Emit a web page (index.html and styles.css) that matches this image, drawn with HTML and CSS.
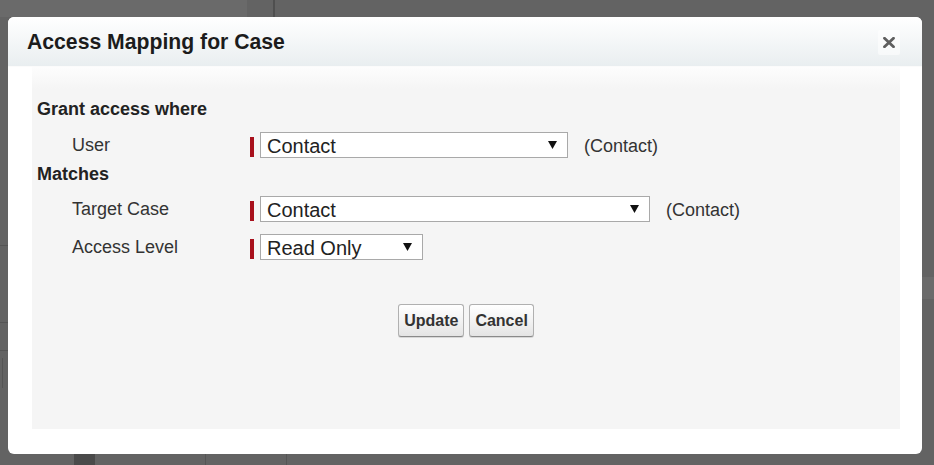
FILE: index.html
```html
<!DOCTYPE html>
<html>
<head>
<meta charset="utf-8">
<title>Access Mapping for Case</title>
<link rel="stylesheet" href="styles.css">
</head>
<body>
<div class="dialog">
  <div class="dialog-header">
    <h2 class="dialog-title">Access Mapping for Case</h2>
    <button class="close-btn" type="button" aria-label="Close">
      <svg width="12" height="11" viewBox="0 0 12 11"><path d="M1.5 1.2 L10.5 9.8 M10.5 1.2 L1.5 9.8" stroke="#5f5f5f" stroke-width="2.8" stroke-linecap="round"/></svg>
    </button>
  </div>
  <div class="dialog-body">
    <div class="panel">
      <div class="section-title">Grant access where</div>
      <div class="form-row row-user">
        <div class="label">User</div>
        <span class="required"></span>
        <div class="select select-user">
          <select><option>Contact</option></select>
          <svg class="arrow" width="9" height="8" viewBox="0 0 9 8"><path d="M0 0 H9 L4.5 8 Z" fill="#111"/></svg>
        </div>
        <span class="hint">(Contact)</span>
      </div>
      <div class="section-title section-matches">Matches</div>
      <div class="form-row row-target">
        <div class="label">Target Case</div>
        <span class="required"></span>
        <div class="select select-target">
          <select><option>Contact</option></select>
          <svg class="arrow" width="9" height="8" viewBox="0 0 9 8"><path d="M0 0 H9 L4.5 8 Z" fill="#111"/></svg>
        </div>
        <span class="hint">(Contact)</span>
      </div>
      <div class="form-row row-level">
        <div class="label">Access Level</div>
        <span class="required"></span>
        <div class="select select-level">
          <select><option>Read Only</option></select>
          <svg class="arrow" width="9" height="8" viewBox="0 0 9 8"><path d="M0 0 H9 L4.5 8 Z" fill="#111"/></svg>
        </div>
      </div>
      <div class="buttons">
        <button class="btn" type="button">Update</button>
        <button class="btn" type="button">Cancel</button>
      </div>
    </div>
  </div>
</div>
</body>
</html>
```

FILE: styles.css
```css
html, body {
  margin: 0;
  padding: 0;
}

body {
  width: 934px;
  height: 465px;
  overflow: hidden;
  box-sizing: border-box;
  padding: 17px 12px 0 8px;
  font-family: "Liberation Sans", Arial, sans-serif;
  background-color: #636363;
  background-image:
    linear-gradient(#4f4f4f, #4f4f4f),
    linear-gradient(#6a6a6a, #6a6a6a),
    linear-gradient(#555, #555),
    linear-gradient(#555, #555),
    linear-gradient(#555, #555),
    linear-gradient(#555, #555),
    linear-gradient(#4a4a4a, #4a4a4a),
    linear-gradient(#555, #555),
    linear-gradient(#555, #555),
    linear-gradient(#6b6b6b, #6b6b6b);
  background-size:
    2px 17px,
    247px 17px,
    8px 1px,
    8px 1px,
    8px 1px,
    1px 30px,
    21px 12px,
    1px 12px,
    1px 12px,
    12px 22px;
  background-position:
    273px 0,
    0 0,
    0 245px,
    0 322px,
    0 350px,
    2px 358px,
    74px 454px,
    205px 454px,
    286px 454px,
    922px 277px;
  background-repeat: no-repeat;
}

.dialog {
  width: 914px;
  height: 437px;
  background: #fff;
  border-radius: 6px;
  display: flex;
  flex-direction: column;
  overflow: hidden;
}

.dialog-header {
  height: 49px;
  border-bottom: 1px solid #fbfbfb;
  background: linear-gradient(#ffffff, #e9eef0);
  display: flex;
  align-items: center;
  justify-content: space-between;
  padding: 0 22px 0 19px;
  flex-shrink: 0;
}

.dialog-title {
  margin: 0;
  font-size: 21.2px;
  font-weight: bold;
  color: #1c1c1c;
  line-height: 24px;
  padding-top: 1px;
}

.close-btn {
  width: 22px;
  height: 25px;
  border: none;
  padding: 0;
  margin-top: 2px;
  background: rgba(255, 255, 255, 0.55);
  display: flex;
  align-items: center;
  justify-content: center;
  border-radius: 2px;
}

.dialog-body {
  flex: 1;
  padding: 0 22px 25px 24px;
}

.panel {
  height: 100%;
  box-sizing: border-box;
  background: linear-gradient(#fdfdfd, #f5f5f5 22px, #f5f5f5);
  padding: 32px 5px 0 5px;
  display: flex;
  flex-direction: column;
}

.section-title {
  font-size: 18px;
  font-weight: bold;
  line-height: 21px;
  color: #222;
}

.section-matches {
  margin-top: 6px;
}

.form-row {
  display: flex;
  align-items: center;
  height: 26px;
  font-size: 18px;
  color: #333;
}

.row-user {
  margin-top: 12px;
}

.row-target {
  margin-top: 11px;
}

.row-level {
  margin-top: 12px;
}

.label {
  width: 178px;
  padding-left: 35px;
  line-height: 21px;
}

.required {
  width: 4px;
  height: 20px;
  background: #a8101c;
  margin-right: 6px;
  align-self: flex-end;
  margin-bottom: 1px;
}

.select {
  height: 26px;
  box-sizing: border-box;
  border: 1px solid #a9a9a9;
  background: #fff;
  display: flex;
  align-items: center;
}

.select select {
  flex: 1;
  min-width: 0;
  height: 24px;
  border: none;
  background: transparent;
  -webkit-appearance: none;
  appearance: none;
  font-family: "Liberation Sans", Arial, sans-serif;
  font-size: 20px;
  color: #222;
  padding: 2px 0 0 6px;
  margin: 0;
  outline: none;
}

.select .arrow {
  margin-right: 10px;
  flex-shrink: 0;
}

.select-user {
  width: 308px;
}

.select-target {
  width: 390px;
}

.select-level {
  width: 163px;
}

.hint {
  margin-left: 16px;
  padding-top: 3px;
  color: #333;
}

.buttons {
  margin-top: 44px;
  display: flex;
  justify-content: center;
  gap: 5px;
}

.btn {
  height: 33px;
  padding: 0 5px;
  border: 1px solid #b0b0b0;
  border-bottom-color: #8a8a8a;
  border-radius: 3px;
  background: linear-gradient(#ffffff, #f0f0f0 60%, #e4e4e4);
  box-shadow: 0 1px 0 rgba(0, 0, 0, 0.12);
  font-family: "Liberation Sans", Arial, sans-serif;
  font-size: 16px;
  font-weight: bold;
  color: #333;
}
```
